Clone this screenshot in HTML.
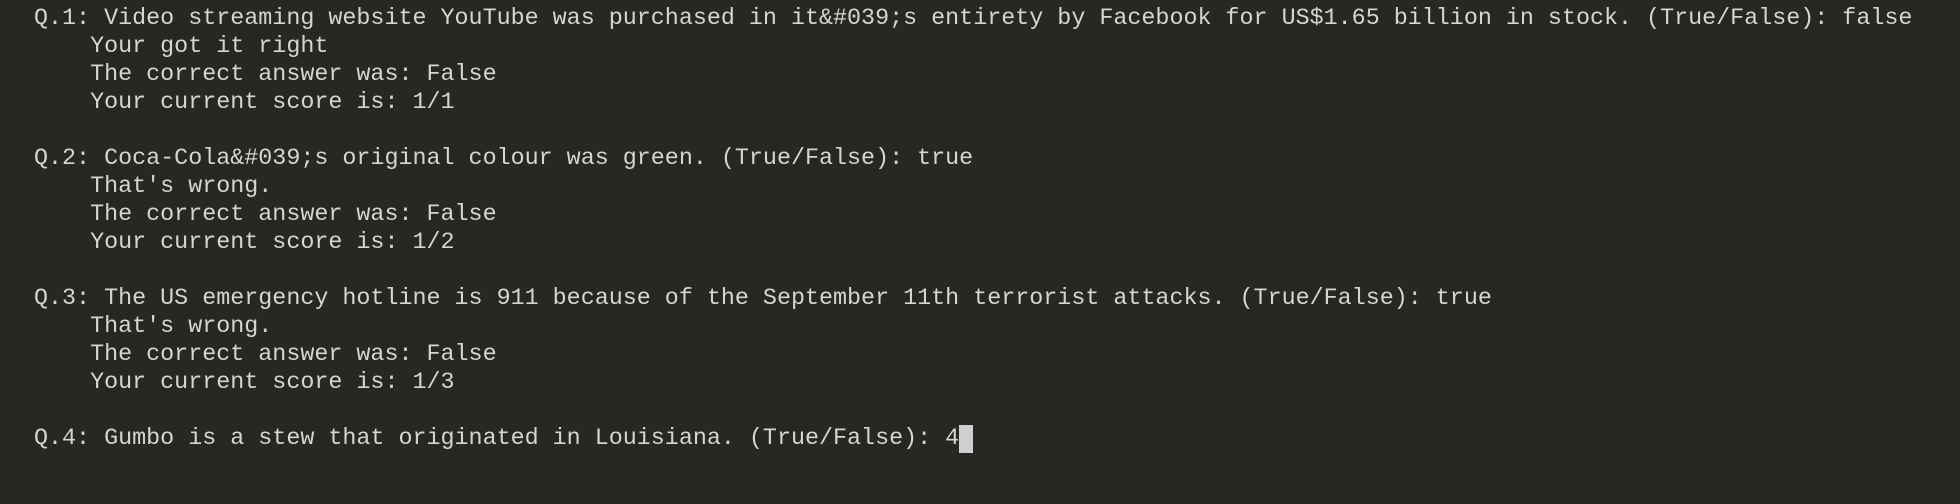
<!DOCTYPE html>
<html><head><style>
html,body{margin:0;padding:0;background:#272723;width:1960px;height:504px;overflow:hidden}
pre{margin:0;position:absolute;left:34px;top:5px;font-family:"Liberation Mono","DejaVu Sans Mono",monospace;font-size:23.37px;line-height:28px;color:#d6d6ce;white-space:pre}
.c{display:inline-block;width:14px;height:28px;background:#cfcfcf;vertical-align:top}
</style></head><body><pre>Q.1: Video streaming website YouTube was purchased in it&amp;#039;s entirety by Facebook for US$1.65 billion in stock. (True/False): false
    Your got it right
    The correct answer was: False
    Your current score is: 1/1

Q.2: Coca-Cola&amp;#039;s original colour was green. (True/False): true
    That's wrong.
    The correct answer was: False
    Your current score is: 1/2

Q.3: The US emergency hotline is 911 because of the September 11th terrorist attacks. (True/False): true
    That's wrong.
    The correct answer was: False
    Your current score is: 1/3

Q.4: Gumbo is a stew that originated in Louisiana. (True/False): 4<span class="c"></span>
</pre></body></html>
